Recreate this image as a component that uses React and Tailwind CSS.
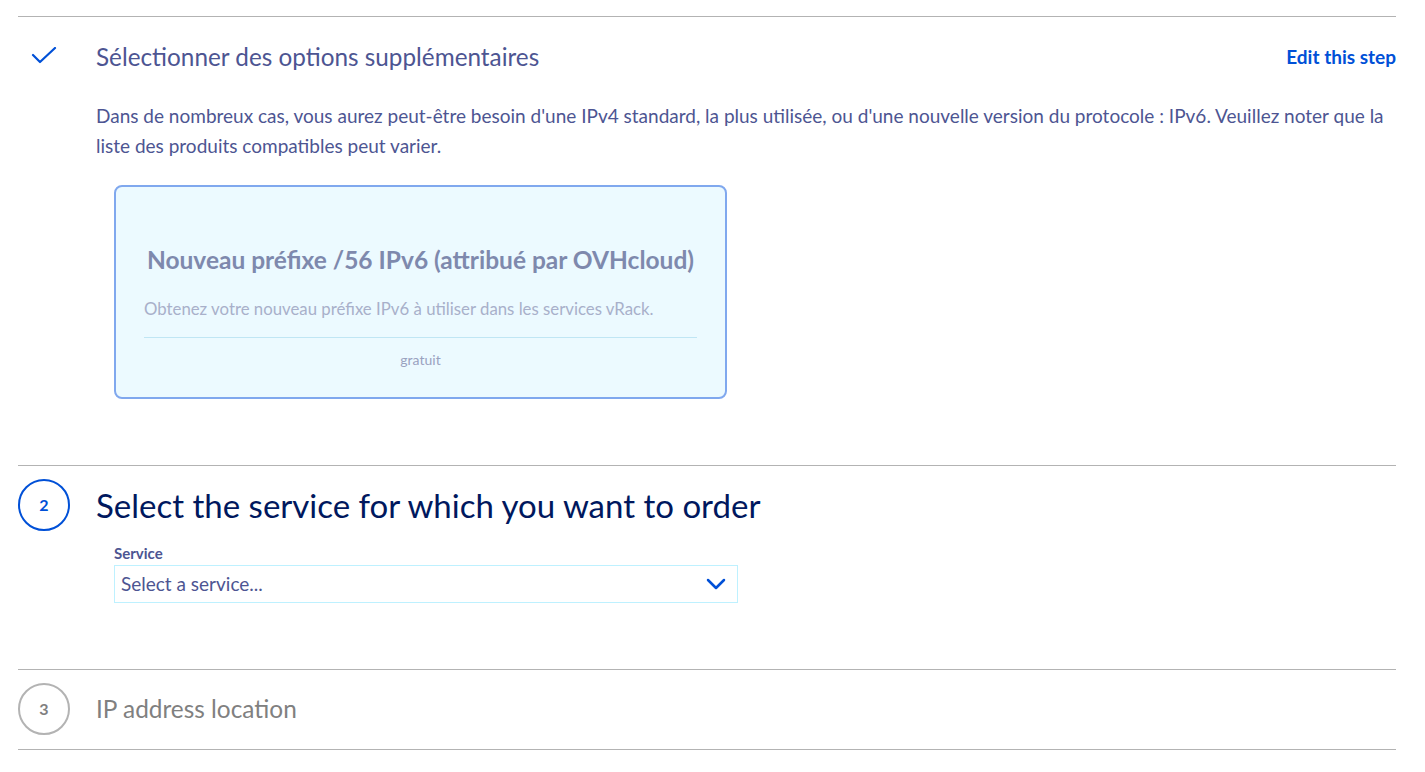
import React from "react";

const font = { fontFamily: '"Source Sans Pro", Lato, "Liberation Sans", sans-serif' };

const CheckIcon = () => (
  <svg width="26" height="20" viewBox="0 0 26 20" fill="none">
    <polyline points="2,8 9,15 24,1" stroke="#0050d7" strokeWidth="2.2" strokeLinecap="round" strokeLinejoin="round" />
  </svg>
);

const Chevron = () => (
  <svg width="20" height="12" viewBox="0 0 20 12" fill="none">
    <polyline points="2,2 10,10 18,2" stroke="#0050d7" strokeWidth="2.5" strokeLinecap="round" strokeLinejoin="round" />
  </svg>
);

const StepCircle = ({ n, active }) => (
  <div
    className={
      active
        ? "w-[52px] h-[52px] rounded-full border-2 border-[#0050d7] text-[#0050d7] flex items-center justify-center text-[16px] font-bold"
        : "w-[52px] h-[52px] rounded-full border-2 border-[#b3b3b3] text-[#808080] flex items-center justify-center text-[16px] font-bold"
    }
  >
    {n}
  </div>
);

export default function App() {
  return (
    <div className="bg-white min-h-[772px] pt-[16px]" style={font}>
      <div className="ml-[18px] w-[1378px]">
        {/* step 1 */}
        <section className="border-t border-[#b3b3b3] pb-[66px]">
          <div className="h-[80px] flex items-center">
            <div className="w-[78px] flex pl-[13px]">
              <CheckIcon />
            </div>
            <h2 className="flex-1 text-[24.3px] text-[#4d5592] leading-none">
              Sélectionner des options supplémentaires
            </h2>
            <a className="text-[19px] font-bold text-[#0050d7]">Edit this step</a>
          </div>
          <p className="ml-[78px] mt-[4px] text-[19px] leading-[30px] text-[#4d5592] pr-[10px]">
            Dans de nombreux cas, vous aurez peut-être besoin d'une IPv4 standard, la plus utilisée, ou d'une nouvelle version du protocole : IPv6. Veuillez noter que la liste des produits compatibles peut varier.
          </p>
          <div className="ml-[96px] mt-[24px] w-[613px] h-[214px] rounded-[8px] border-2 border-[#80a8ee] bg-[#ecfaff] px-[28px] flex flex-col">
            <div className="mt-[55px] text-center text-[24.5px] font-bold text-[#7e89ad] leading-[36px]">
              Nouveau préfixe /56 IPv6 (attribué par OVHcloud)
            </div>
            <div className="mt-[18px] text-[16.8px] text-[#a8b0ca] leading-[26px]">
              Obtenez votre nouveau préfixe IPv6 à utiliser dans les services vRack.
            </div>
            <div className="mt-[15px] border-t border-[#c0e6f4]" />
            <div className="mt-[12px] text-center text-[14px] text-[#9aa2bf] leading-[20px]">gratuit</div>
          </div>
        </section>

        {/* step 2 */}
        <section className="border-t border-[#b3b3b3] pt-[13px] pb-[66px]">
          <div className="flex items-center">
            <div className="w-[78px]">
              <StepCircle n="2" active />
            </div>
            <h2 className="text-[33px] text-[#00185e] leading-none">
              Select the service for which you want to order
            </h2>
          </div>
          <div className="ml-[96px] mt-[13px] w-[624px]">
            <label className="block text-[15px] font-bold text-[#4d5592] leading-[18px]">Service</label>
            <div className="mt-[3px] h-[38px] border border-[#bef1ff] flex items-center justify-between pl-[6px] pr-[11px]">
              <span className="text-[19px] text-[#4d5592]">Select a service...</span>
              <Chevron />
            </div>
          </div>
        </section>

        {/* step 3 */}
        <section className="border-t border-b border-[#b3b3b3] pt-[13px] pb-[14px]">
          <div className="flex items-center">
            <div className="w-[78px]">
              <StepCircle n="3" />
            </div>
            <h2 className="text-[24.4px] text-[#808080] leading-none">IP address location</h2>
          </div>
        </section>
      </div>
    </div>
  );
}
